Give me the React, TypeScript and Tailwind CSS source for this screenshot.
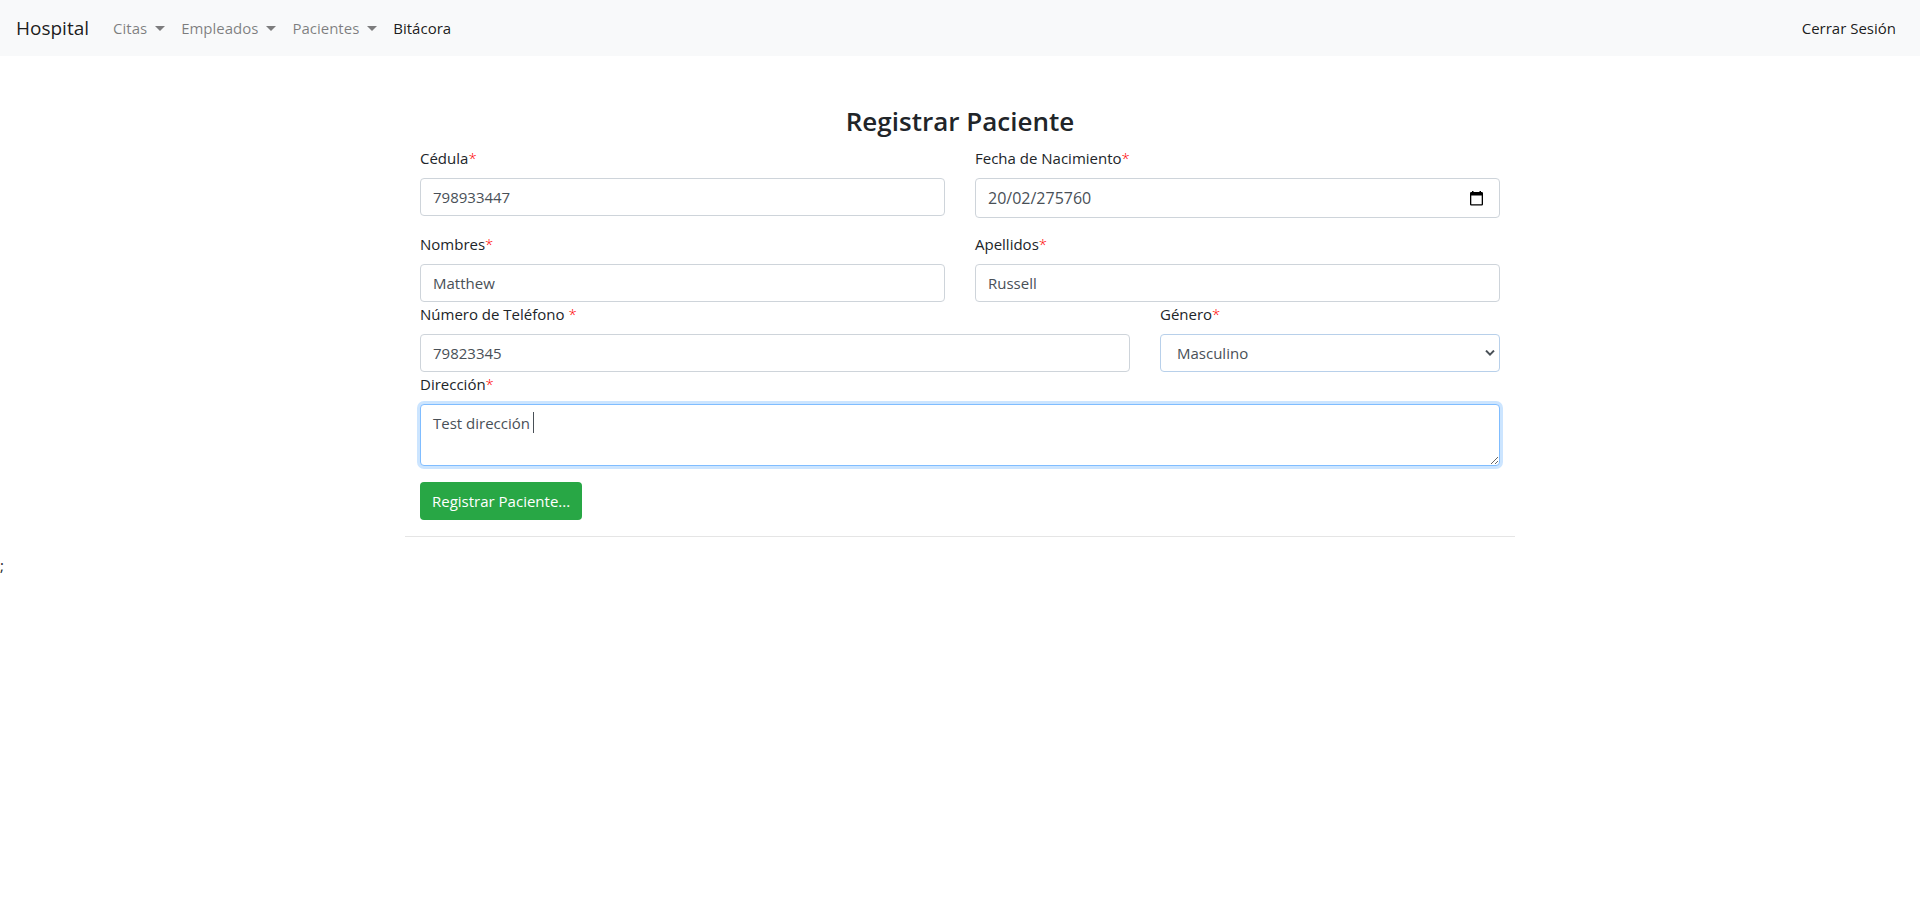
import { useState, type ReactNode } from "react";

const controlClass =
  "block w-full h-[38px] rounded border border-[#ced4da] bg-white px-3 text-[15px] leading-6 text-[#495057] outline-none";

function Caret() {
  return (
    <svg viewBox="0 0 10 5" className="ml-2 h-[5px] w-[10px]" fill="currentColor" aria-hidden="true">
      <path d="M0 0h10L5 5z" />
    </svg>
  );
}

function NavMenu({ children }: { children: ReactNode }) {
  return (
    <li>
      <button type="button" aria-haspopup="menu" className="flex items-center p-2 leading-6 text-black/50">
        {children}
        <Caret />
      </button>
    </li>
  );
}

function Label({ htmlFor, children }: { htmlFor: string; children: ReactNode }) {
  return (
    <label htmlFor={htmlFor} className="mb-2 block leading-6">
      {children}
      <span className="font-light text-[#ff0000]">*</span>
    </label>
  );
}

export default function App() {
  const [address, setAddress] = useState("Test dirección ");

  return (
    <div className="bg-white font-['Open_Sans',sans-serif] text-[15px] leading-6 text-[#212529]">
      <nav className="flex h-14 items-center bg-[#f8f9fa] px-4">
        <a href="#inicio" className="mr-4 text-[19px] leading-8 text-black/90">
          Hospital
        </a>
        <ul className="flex flex-1">
          <NavMenu>Citas</NavMenu>
          <NavMenu>Empleados</NavMenu>
          <NavMenu>Pacientes</NavMenu>
          <li>
            <a href="#bitacora" className="block p-2 text-black/90">
              Bitácora
            </a>
          </li>
        </ul>
        <a href="#salir" className="p-2 text-black/90">
          Cerrar Sesión
        </a>
      </nav>

      <main className="mx-auto max-w-[1110px] pt-12">
        <form className="px-[15px]" onSubmit={(e) => e.preventDefault()}>
          <h1 className="mb-2 text-center text-[26px] leading-[34px] font-semibold">Registrar Paciente</h1>

          <div className="grid grid-cols-2 gap-x-[30px]">
            <div className="mb-4">
              <Label htmlFor="cedula">Cédula</Label>
              <input id="cedula" className={controlClass} defaultValue="798933447" />
            </div>
            <div>
              <Label htmlFor="nacimiento">Fecha de Nacimiento</Label>
              <div className="flex h-10 items-center rounded border border-[#ced4da] px-3">
                <input
                  id="nacimiento"
                  className="w-full min-w-0 flex-1 bg-transparent text-base text-[#495057] outline-none"
                  defaultValue="20/02/275760"
                />
                <button type="button" aria-label="Abrir calendario" className="px-1 text-black">
                  <svg viewBox="0 0 13 15" className="h-[15px] w-[13px]" fill="currentColor" aria-hidden="true">
                    <path
                      fillRule="evenodd"
                      d="M2 0h1.500v1h6V0H11v1h.7A1.300 1.300 0 0 1 13 2.300v10.900a1.300 1.300 0 0 1-1.300 1.300H1.300A1.300 1.300 0 0 1 0 13.200V2.300A1.300 1.300 0 0 1 1.300 1H2zM1.300 4.500v8.700h10.400V4.500z"
                    />
                  </svg>
                </button>
              </div>
            </div>
          </div>

          <div className="grid grid-cols-2 gap-x-[30px]">
            <div>
              <Label htmlFor="nombres">Nombres</Label>
              <input id="nombres" className={controlClass} defaultValue="Matthew" />
            </div>
            <div>
              <Label htmlFor="apellidos">Apellidos</Label>
              <input id="apellidos" className={controlClass} defaultValue="Russell" />
            </div>
          </div>

          <div className="flex gap-[30px]">
            <div className="flex-1">
              <Label htmlFor="telefono">Número de Teléfono </Label>
              <input id="telefono" type="tel" className={controlClass} defaultValue="79823345" />
            </div>
            <div className="w-[340px]">
              <Label htmlFor="genero">Género</Label>
              <div className="relative">
                <select
                  id="genero"
                  defaultValue="Masculino"
                  className="block h-[38px] w-full appearance-none rounded border border-[#b8d0ea] bg-white px-4 leading-6 text-[#495057] outline-none"
                >
                  <option>Masculino</option>
                  <option>Femenino</option>
                </select>
                <svg
                  viewBox="0 0 10 6"
                  className="pointer-events-none absolute top-4 right-[5px] h-[6px] w-[10px] text-[#495057]"
                  fill="none"
                  stroke="currentColor"
                  strokeWidth="2"
                  aria-hidden="true"
                >
                  <path d="M1 .6l4 4 4-4" />
                </svg>
              </div>
            </div>
          </div>

          <div className="mb-4">
            <Label htmlFor="direccion">Dirección</Label>
            <div className="relative">
              <textarea
                id="direccion"
                rows={2}
                value={address}
                onChange={(e) => setAddress(e.target.value)}
                className="block h-[62px] w-full resize-y rounded border border-[#80bdff] bg-white px-3 py-[6px] leading-6 text-[#495057] shadow-[0_0_0_3px_#cce5ff] outline-none"
              />
              <span className="pointer-events-none absolute top-2 left-[113px] h-[21px] w-px bg-[#495057]" />
            </div>
          </div>

          <button type="submit" className="mb-4 block h-[38px] rounded bg-[#28a745] px-3 text-white">
            Registrar Paciente...
          </button>
        </form>
        <hr className="mb-4 border-black/10" />
      </main>
      <p>;</p>
    </div>
  );
}
